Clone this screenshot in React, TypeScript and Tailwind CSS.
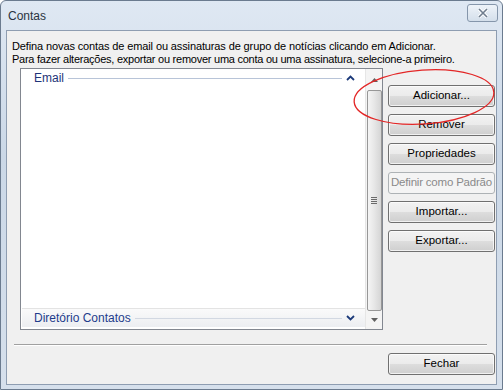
import React from "react";

const btn =
  "w-[107px] h-[22px] rounded-[3px] border border-[#707070] bg-[linear-gradient(to_bottom,#f2f2f2_0%,#ebebeb_50%,#dddddd_51%,#cfcfcf_100%)] shadow-[inset_0_0_0_1px_rgba(255,255,255,0.7)] text-[11.5px] text-black flex items-center justify-center whitespace-nowrap";

const BUTTONS = ["Adicionar...", "Remover", "Propriedades", "Definir como Padrão", "Importar...", "Exportar..."];

const Chevron = ({ up }: { up?: boolean }) => (
  <svg width="9" height="6" viewBox="0 0 9 6">
    <path
      d={up ? "M1 5 L4.5 1.5 L8 5" : "M1 1 L4.5 4.5 L8 1"}
      fill="none"
      stroke="#1c3a7a"
      strokeWidth="1.8"
    />
  </svg>
);

export default function App() {
  return (
    <div
      className="relative w-[503px] h-[390px] flex flex-col border border-[#6b7b8f] rounded-t-[6px] bg-[linear-gradient(to_bottom,#dfe8f3,#cbd8e7_40%,#d6e0ec)]"
      style={{ fontFamily: '"Liberation Sans", Arial, sans-serif' }}
    >
      {/* title bar */}
      <div className="h-[29px] flex items-center justify-between pl-[7px] pr-[4px]">
        <span className="text-[12px] text-[#2a3440]">Contas</span>
        <div className="w-[31px] h-[18px] mt-[-5px] rounded-[3px] border border-[#8596ab] bg-[linear-gradient(to_bottom,#eef3f9,#d4dfeb)] flex items-center justify-center">
          <svg width="12" height="10" viewBox="0 0 12 10">
            <path d="M2 1 L10 9 M10 1 L2 9" stroke="#ffffff" strokeWidth="3.2" />
            <path d="M2 1 L10 9 M10 1 L2 9" stroke="#6f7d8e" strokeWidth="1.6" />
          </svg>
        </div>
      </div>

      {/* client area */}
      <div className="flex-1 mx-[5px] mb-[4px] border border-[#8e9db1] bg-[#f0f0f0] flex flex-col">
        <div className="pl-[5px] pt-[9px] text-[11px] leading-[13px] text-black whitespace-nowrap">
          <p className="tracking-[-0.12px]">Defina novas contas de email ou assinaturas de grupo de notícias clicando em Adicionar.</p>
          <p className="tracking-[-0.25px]">Para fazer alterações, exportar ou remover uma conta ou uma assinatura, selecione-a primeiro.</p>
        </div>

        <div className="flex mt-[2px] ml-[13px]">
          {/* list */}
          <div className="w-[363px] h-[262px] border border-[#828790] bg-white flex">
            <div className="flex-1 flex flex-col justify-between">
              <div className="h-[18px] flex items-center pl-[13px] pr-[10px]">
                <span className="text-[12px] text-[#1e3479]">Email</span>
                <div className="flex-1 h-px bg-[#b8c4d8] mx-[4px]" />
                <Chevron up />
              </div>
              <div className="h-[19px] mb-[2px] ml-px flex items-center pl-[12px] pr-[10px] border-t border-[#e3e3e3] bg-[linear-gradient(to_bottom,#fafafa,#eceef1)]">
                <span className="text-[12px] text-[#1e3c8c]">Diretório Contatos</span>
                <div className="flex-1 h-px bg-[#d2d8e2] mx-[4px]" />
                <Chevron />
              </div>
            </div>
            {/* scrollbar */}
            <div className="w-[17px] bg-[#f4f4f4] border-l border-[#e6e6e6] flex flex-col items-center">
              <div className="h-[21px] flex items-center justify-center">
                <svg width="7" height="4" viewBox="0 0 7 4">
                  <path d="M0 4 L3.5 0 L7 4 Z" fill="#606060" />
                </svg>
              </div>
              <div className="flex-1 w-[15px] rounded-[2px] border border-[#979797] bg-[linear-gradient(to_right,#f5f5f5,#e6e6e6_50%,#d5d5d5)] flex items-center justify-center">
                <div className="flex flex-col gap-[1px]">
                  <div className="w-[6px] h-px bg-[#6a6a6a]" />
                  <div className="w-[6px] h-px bg-[#6a6a6a]" />
                  <div className="w-[6px] h-px bg-[#6a6a6a]" />
                  <div className="w-[6px] h-px bg-[#6a6a6a]" />
                </div>
              </div>
              <div className="h-[18px] flex items-center justify-center">
                <svg width="7" height="4" viewBox="0 0 7 4">
                  <path d="M0 0 L3.5 4 L7 0 Z" fill="#606060" />
                </svg>
              </div>
            </div>
          </div>

          {/* buttons */}
          <div className="ml-[5px] pt-[17px] flex flex-col gap-[7px]">
            {BUTTONS.map((b) =>
              b === "Definir como Padrão" ? (
                <div
                  key={b}
                  className="w-[107px] h-[22px] rounded-[3px] border border-[#adb2b5] bg-[#f4f4f4] text-[11.5px] text-[#8a8a8a] flex items-center justify-center whitespace-nowrap tracking-[-0.2px]"
                >
                  {b}
                </div>
              ) : (
                <div key={b} className={btn}>
                  {b}
                </div>
              )
            )}
          </div>
        </div>

        <div className="mt-[14px] ml-[7px] w-[473px] h-[2px] border-t border-[#a0a0a0] border-b border-b-white" />

        <div className="mt-[7px] ml-[381px]">
          <div className={btn}>Fechar</div>
        </div>
      </div>

      {/* red annotation */}
      <svg className="absolute left-[345px] top-[60px] pointer-events-none" width="158" height="72" viewBox="0 0 158 72">
        <ellipse cx="78" cy="36" rx="70" ry="27" transform="rotate(-4 78 36)" fill="none" stroke="#e32626" strokeWidth="1.3" />
      </svg>
    </div>
  );
}
